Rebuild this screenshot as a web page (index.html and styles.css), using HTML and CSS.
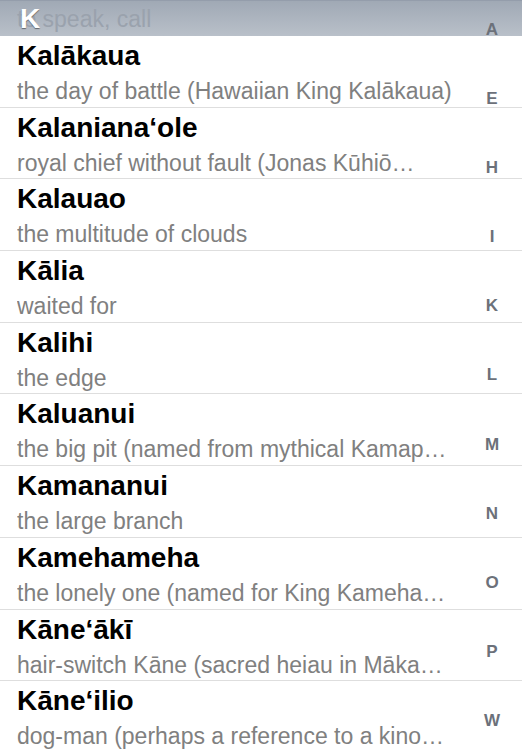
FILE: index.html
```html
<!DOCTYPE html>
<html lang="en">
<head>
    <meta charset="UTF-8">
    <title>Place Names - K</title>
    <link rel="stylesheet" href="styles.css">
</head>
<body>
    <div id="screen">
        <div class="section-header">
            <span class="header-under">to speak, call</span>
            <span class="header-letter">K</span>
        </div>

        <ul id="name-list">
            <li class="row">
                <div class="row-title">Kalākaua</div>
                <div class="row-sub">the day of battle (Hawaiian King Kalākaua)</div>
            </li>
            <li class="row">
                <div class="row-title">Kalaniana‘ole</div>
                <div class="row-sub">royal chief without fault (Jonas Kūhiō…</div>
            </li>
            <li class="row">
                <div class="row-title">Kalauao</div>
                <div class="row-sub">the multitude of clouds</div>
            </li>
            <li class="row">
                <div class="row-title">Kālia</div>
                <div class="row-sub">waited for</div>
            </li>
            <li class="row">
                <div class="row-title">Kalihi</div>
                <div class="row-sub">the edge</div>
            </li>
            <li class="row">
                <div class="row-title">Kaluanui</div>
                <div class="row-sub">the big pit (named from mythical Kamap…</div>
            </li>
            <li class="row">
                <div class="row-title">Kamananui</div>
                <div class="row-sub">the large branch</div>
            </li>
            <li class="row">
                <div class="row-title">Kamehameha</div>
                <div class="row-sub">the lonely one (named for King Kameha…</div>
            </li>
            <li class="row">
                <div class="row-title">Kāne‘ākī</div>
                <div class="row-sub">hair-switch Kāne (sacred heiau in Māka…</div>
            </li>
            <li class="row">
                <div class="row-title">Kāne‘ilio</div>
                <div class="row-sub">dog-man (perhaps a reference to a kino…</div>
            </li>
        </ul>

        <div id="index-bar">
            <span>A</span>
            <span>E</span>
            <span>H</span>
            <span>I</span>
            <span>K</span>
            <span>L</span>
            <span>M</span>
            <span>N</span>
            <span>O</span>
            <span>P</span>
            <span>W</span>
        </div>
    </div>
</body>
</html>
```

FILE: styles.css
```css
body {
    margin: 0;
    font-family: "Liberation Sans", Arial, sans-serif;
    background-color: #fff;
}
#screen {
    position: relative;
    width: 522px;
    height: 750px;
    overflow: hidden;
}
.section-header {
    display: grid;
    height: 36px;
    padding-left: 17px;
    background: linear-gradient(#a0a9b5, #b9c0c9);
    border-top: 1px solid #949dab;
    box-sizing: border-box;
    overflow: hidden;
}
.header-under,
.header-letter {
    grid-area: 1 / 1;
    line-height: 35px;
    white-space: nowrap;
}
.header-under {
    font-size: 23px;
    color: #9aa2ad;
    padding-top: 1px;
}
.header-letter {
    font-size: 28px;
    font-weight: bold;
    color: #fff;
    padding-left: 3px;
    text-shadow: 0 1px 1px rgba(0, 0, 0, 0.45);
}
#name-list {
    list-style: none;
    margin: 0;
    padding: 0;
}
.row {
    height: 71.7px;
    box-sizing: border-box;
    padding: 3px 58px 0 17px;
    border-bottom: 1px solid #dedede;
}
.row-title {
    font-size: 28px;
    font-weight: bold;
    line-height: 34px;
    color: #000;
    white-space: nowrap;
}
.row-sub {
    margin-top: 4px;
    font-size: 23px;
    line-height: 28px;
    color: #808080;
    white-space: nowrap;
    overflow: hidden;
    text-overflow: ellipsis;
}
#index-bar {
    position: absolute;
    top: -5px;
    right: 0;
    width: 60px;
    display: flex;
    flex-direction: column;
    align-items: center;
}
#index-bar span {
    font-size: 17px;
    font-weight: bold;
    line-height: 69.1px;
    color: #6c717a;
}
```
